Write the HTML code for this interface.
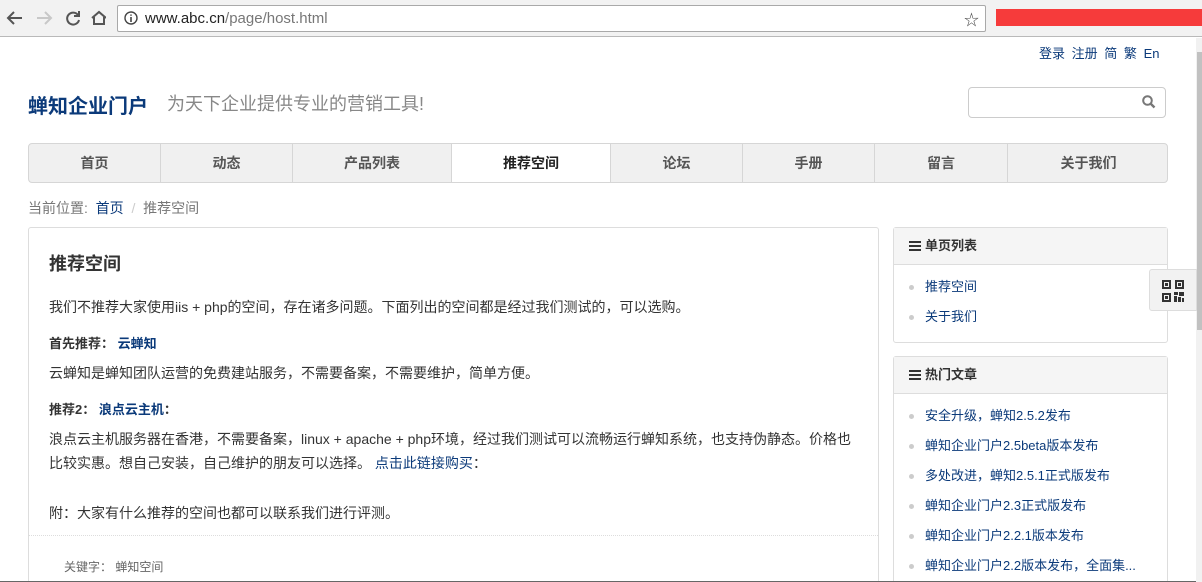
<!DOCTYPE html>
<html style="width:1202px;height:582px;overflow:hidden"><head><meta charset="utf-8">
<style>
*{margin:0;padding:0;box-sizing:border-box}
body{width:1202px;height:582px;overflow:hidden;background:#fff;font-family:"Liberation Sans","Noto Sans CJK SC",sans-serif;font-size:13px;color:#333;position:relative}
.abs{position:absolute}
.chrome{left:0;top:0;width:1202px;height:37px;background:#f2f2f2;border-bottom:1px solid #b9b9b9}
.addr{left:117px;top:5px;width:869px;height:27px;background:#fff;border:1px solid #a9a9a9;border-radius:2px;font-size:15px;line-height:25px;padding-left:27px;color:#222}
.red{left:996px;top:9px;width:206px;height:17px;background:#f63b3b}
a{color:#0b3a7a;text-decoration:none}
.nav{left:28px;top:143px;width:1140px;height:40px;border:1px solid #d6d6d6;border-radius:4px;background:#f0f0f0;overflow:hidden}
.nav div{position:absolute;top:0;height:38px;line-height:38px;text-align:center;border-right:1px solid #d6d6d6;font-weight:bold;color:#555;font-size:14px}
.panel{border:1px solid #ddd;border-radius:3px;background:#fff}
.ph{height:37px;background:#f5f5f5;border-bottom:1px solid #ddd;line-height:36px;padding-left:15px;font-weight:bold;font-size:13px;color:#333}
.ph i{display:inline-block;width:12px;height:10px;margin-right:4px;vertical-align:-1px;background:linear-gradient(#333 0 2px,transparent 2px 4px,#333 4px 6px,transparent 6px 8px,#333 8px 10px)}
ul{list-style:none;padding:0 15px}
li{height:30px;line-height:30px;padding-left:16px;position:relative;white-space:nowrap}
li:before{content:"";position:absolute;left:0;top:13px;width:5px;height:5px;border-radius:50%;background:#ccc}
.p{position:absolute;left:20px;white-space:nowrap;font-size:14px}
</style></head><body>
<div class="abs chrome"></div>
<svg class="abs" style="left:6px;top:9px" width="100" height="18" viewBox="0 0 100 18" fill="none" stroke-width="2">
<path d="M16 9H3M8 3L2 9l6 6" stroke="#555"/>
<path d="M31 9h13M39 3l6 6-6 6" stroke="#c8c8c8"/>
<path d="M72 6a6 6 0 1 0 1 5" stroke="#555"/><path d="M73 2v5h-5" stroke="#555" fill="none"/>
<path d="M86 9l7-6 7 6M88 8v7h10V8" stroke="#555"/>
</svg>
<div class="abs addr">www.abc.cn<span style="color:#777">/page/host.html</span></div>
<svg class="abs" style="left:124px;top:11px" width="14" height="14"><circle cx="7" cy="7" r="6" fill="none" stroke="#444" stroke-width="1.4"/><path d="M7 6v5M7 3.5v1.3" stroke="#444" stroke-width="1.6"/></svg>
<div class="abs" style="left:964px;top:9px;font-size:15px;color:#444">☆</div>
<div class="abs red"></div>
<div class="abs" style="left:1196px;top:38px;width:6px;height:544px;background:#f1f1f1"></div>
<div class="abs" style="left:1197px;top:52px;width:5px;height:278px;background:#c1c1c1"></div>

<div class="abs" style="left:1039px;top:43px;font-size:13px;word-spacing:3px"><a>登录</a> <a>注册</a> <a>简</a> <a>繁</a> <a>En</a></div>
<div class="abs" style="left:28px;top:90px;font-size:20px;font-weight:bold;color:#0b3a7a">蝉知企业门户</div>
<div class="abs" style="left:167px;top:90px;font-size:18px;color:#888">为天下企业提供专业的营销工具!</div>
<div class="abs" style="left:968px;top:87px;width:198px;height:31px;border:1px solid #ccc;border-radius:4px"></div>
<svg class="abs" style="left:1142px;top:95px" width="14" height="14"><circle cx="5.5" cy="5.5" r="4.3" fill="none" stroke="#777" stroke-width="2"/><path d="M8.5 8.5l4 4" stroke="#777" stroke-width="2.4"/></svg>

<div class="abs nav">
<div style="left:0;width:132px">首页</div>
<div style="left:132px;width:132px">动态</div>
<div style="left:264px;width:159px">产品列表</div>
<div style="left:423px;width:159px;background:#fff;color:#222">推荐空间</div>
<div style="left:582px;width:132px">论坛</div>
<div style="left:714px;width:132px">手册</div>
<div style="left:846px;width:133px">留言</div>
<div style="left:979px;width:161px;border:none">关于我们</div>
</div>

<div class="abs" style="left:28px;top:198px;color:#777;font-size:14px">当前位置: &nbsp;<a>首页</a> &nbsp;<span style="color:#ccc">/</span>&nbsp; 推荐空间</div>

<div class="abs panel" style="left:28px;top:227px;width:851px;height:370px">
<div class="p" style="top:22px;font-size:18px;font-weight:bold;color:#333">推荐空间</div>
<div class="p" style="top:69px">我们不推荐大家使用iis + php的空间，存在诸多问题。下面列出的空间都是经过我们测试的，可以选购。</div>
<div class="p" style="top:105px;font-weight:bold;font-size:13px">首先推荐： <a>云蝉知</a></div>
<div class="p" style="top:135px">云蝉知是蝉知团队运营的免费建站服务，不需要备案，不需要维护，简单方便。</div>
<div class="p" style="top:171px;font-weight:bold;font-size:13px">推荐2： <a>浪点云主机</a>：</div>
<div class="p" style="top:201px">浪点云主机服务器在香港，不需要备案，linux + apache + php环境，经过我们测试可以流畅运行蝉知系统，也支持伪静态。价格也</div>
<div class="p" style="top:225px">比较实惠。想自己安装，自己维护的朋友可以选择。 <a>点击此链接购买</a>：</div>
<div class="p" style="top:275px">附：大家有什么推荐的空间也都可以联系我们进行评测。</div>
<div class="abs" style="left:0;top:307px;width:849px;border-top:1px dotted #ddd"></div>
<div class="p" style="top:330px;left:35px;font-size:12px;color:#666">关键字： 蝉知空间</div>
</div>

<div class="abs panel" style="left:893px;top:227px;width:275px;height:116px">
<div class="ph"><i></i>单页列表</div>
<ul style="padding-top:7px"><li><a>推荐空间</a></li><li><a>关于我们</a></li></ul>
</div>
<div class="abs panel" style="left:893px;top:356px;width:275px;height:240px">
<div class="ph"><i></i>热门文章</div>
<ul style="padding-top:7px">
<li><a>安全升级，蝉知2.5.2发布</a></li>
<li><a>蝉知企业门户2.5beta版本发布</a></li>
<li><a>多处改进，蝉知2.5.1正式版发布</a></li>
<li><a>蝉知企业门户2.3正式版发布</a></li>
<li><a>蝉知企业门户2.2.1版本发布</a></li>
<li><a>蝉知企业门户2.2版本发布，全面集...</a></li>
</ul>
</div>
<div class="abs" style="left:1149px;top:269px;width:48px;height:42px;background:#f2f2f2;border:1px solid #ddd;border-radius:3px 0 0 3px"></div>
<svg class="abs" style="left:1162px;top:280px" width="22" height="22" viewBox="0 0 22 22" fill="#333">
<path d="M0 0h9v9H0zM2 2v5h5V2zM13 0h9v9h-9zM15 2v5h5V2zM0 13h9v9H0zM2 15v5h5v-5zM3 3h3v3H3zM16 3h3v3h-3zM3 16h3v3H3zM12 12h4v3h-4zM17 12h5v4h-5zM12 16h3v6h-3zM16 17h3v5h-3zM20 18h2v4h-2z"/>
</svg>
<div class="abs" style="left:0;top:581px;width:1196px;height:1px;background:#666"></div>
</body></html>
